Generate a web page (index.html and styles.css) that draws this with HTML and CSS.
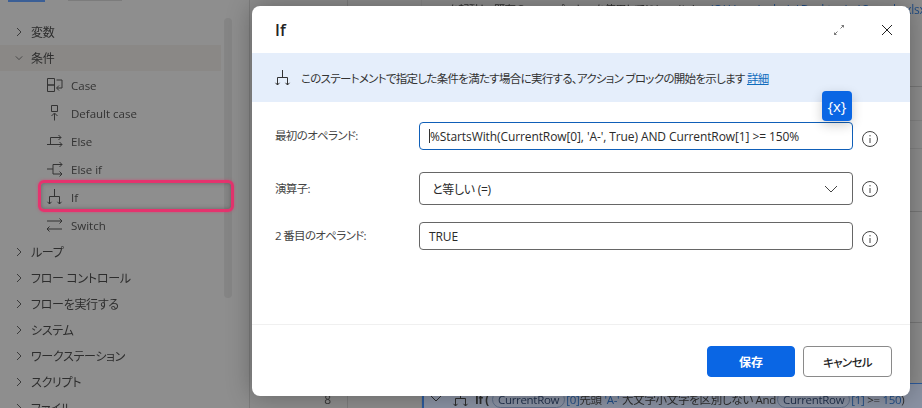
FILE: index.html
```html
<!DOCTYPE html>
<html lang="ja">
<head>
<meta charset="utf-8">
<title>If</title>
<link rel="stylesheet" href="styles.css">
</head>
<body>
<div class="app">
  <aside class="sidebar">
    <div class="tabs"><span class="tab tab-on"></span><span class="tab"></span></div>
    <div class="tree">
      <div class="group"><svg class="chev" width="8" height="10" viewBox="0 0 8 10"><path d="M2 1l4 4-4 4"/></svg>変数</div>
      <div class="group group-open"><svg class="chev" width="10" height="8" viewBox="0 0 10 8"><path d="M1 2l4 4 4-4"/></svg>条件</div>
      <div class="item">
        <svg class="ico" width="18" height="18" viewBox="0 0 18 18"><path d="M1.500 2.500h7v6.500h-7zM1.500 9h7v6.500h-7zM10.500 4h5.500v8h-5M13 9.500l-2.500 2.500 2.500 2.500"/></svg>Case</div>
      <div class="item">
        <svg class="ico" width="18" height="18" viewBox="0 0 18 18"><path d="M5.500 1.500h6v6h-6zM8.500 16.500v-7M5.500 12l3-3 3 3"/></svg>Default case</div>
      <div class="item">
        <svg class="ico" width="18" height="18" viewBox="0 0 18 18"><path d="M1 12.500h15M13.500 10l2.500 2.500-2.500 2.500M4.500 12.500v-7h10.500M12.500 3l2.500 2.500-2.500 2.500"/></svg>Else</div>
      <div class="item">
        <svg class="ico" width="18" height="18" viewBox="0 0 18 18"><path d="M1 9h6M7 4.500v9.500M7 4.500h9M13.500 2l2.500 2.500-2.500 2.500M7 14h9M13.500 11.500l2.500 2.500-2.500 2.500"/></svg>Else if</div>
      <div class="item item-marked">
        <svg class="ico" width="18" height="18" viewBox="0 0 18 18"><path d="M8.500 1v7.500M3.500 16v-7.500h10v7.500M1.500 13.800l2 2.200 2-2.200M11.500 13.800l2 2.200 2-2.200"/></svg>If
        <span class="mark"></span></div>
      <div class="item">
        <svg class="ico" width="18" height="18" viewBox="0 0 18 18"><path d="M1 5h15M13.500 2.500l2.500 2.500-2.500 2.500M16 13h-15M3.500 10.500l-2.500 2.500 2.500 2.500"/></svg>Switch</div>
      <div class="group"><svg class="chev" width="8" height="10" viewBox="0 0 8 10"><path d="M2 1l4 4-4 4"/></svg>ループ</div>
      <div class="group"><svg class="chev" width="8" height="10" viewBox="0 0 8 10"><path d="M2 1l4 4-4 4"/></svg>フロー コントロール</div>
      <div class="group"><svg class="chev" width="8" height="10" viewBox="0 0 8 10"><path d="M2 1l4 4-4 4"/></svg>フローを実行する</div>
      <div class="group"><svg class="chev" width="8" height="10" viewBox="0 0 8 10"><path d="M2 1l4 4-4 4"/></svg>システム</div>
      <div class="group"><svg class="chev" width="8" height="10" viewBox="0 0 8 10"><path d="M2 1l4 4-4 4"/></svg>ワークステーション</div>
      <div class="group"><svg class="chev" width="8" height="10" viewBox="0 0 8 10"><path d="M2 1l4 4-4 4"/></svg>スクリプト</div>
      <div class="group"><svg class="chev" width="8" height="10" viewBox="0 0 8 10"><path d="M2 1l4 4-4 4"/></svg>ファイル</div>
    </div>
    <div class="scrollbar"></div>
  </aside>
  <main class="editor">
    <div class="gutter"><span class="line-no">8</span></div>
    <div class="rail"></div>
    <div class="steps">
      <div class="step step-first"><span class="step-desc">Excel を起動し、既存の Excel プロセスを使用してドキュメント</span><span class="path">(C:\Users\admin\Desktop\...\Sample.xlsx</span></div>
      <div class="step step-b"></div>
      <div class="step step-c"></div>
      <div class="step step-d"></div>
      <div class="step step-e"></div>
      <div class="step step-f"></div>
      <div class="step step-sel">
        <svg class="step-chev" width="12" height="8" viewBox="0 0 12 8"><path d="M1 1l5 5 5-5"/></svg>
        <svg class="step-ico" width="18" height="18" viewBox="0 0 18 18"><path d="M8.500 1v7.500M3.500 16v-7.500h10v7.500M1.500 13.800l2 2.200 2-2.200M11.500 13.800l2 2.200 2-2.200"/></svg>
        <span class="step-text"><b class="step-if">If (</b><span class="pill">CurrentRow</span><span class="blue">[0]</span>先頭 <span class="blue">'A-'</span> 大文字小文字を区別しない And<span class="pill">CurrentRow</span><span class="blue">[1]</span> &gt;= <span class="blue">150</span>)</span>
      </div>
    </div>
  </main>

  <section class="dialog">
    <header class="dialog-head">
      <h1 class="dialog-title">If</h1>
      <svg class="expand" width="14" height="14" viewBox="0 0 14 14"><path d="M2.500 11.500l3-3M2.500 9.500v2h2M11.500 2.500l-3 3M9.500 2.500h2v2"/></svg>
      <svg class="close" width="14" height="14" viewBox="0 0 14 14"><path d="M2 2l10 10M12 2l-10 10"/></svg>
    </header>
    <div class="banner">
      <svg class="ico banner-ico" width="18" height="18" viewBox="0 0 18 18"><path d="M8.500 1v7.500M3.500 16v-7.500h10v7.500M1.500 13.800l2 2.200 2-2.200M11.500 13.800l2 2.200 2-2.200"/></svg>
      <span class="banner-text">このステートメントで指定した条件を満たす場合に実行する、アクション ブロックの開始を示します <a class="more" href="#">詳細</a></span>
    </div>
    <div class="form">
      <div class="field field-first">
        <label class="field-label">最初のオペランド:</label>
        <div class="input input-focus"><i class="caret"></i>%StartsWith(CurrentRow[0], 'A-', True) AND CurrentRow[1] &gt;= 150%
          <span class="var-btn">{x}</span>
        </div>
        <svg class="info" width="18" height="18" viewBox="0 0 18 18"><circle cx="9" cy="9" r="7.500"/><path d="M9 8v5M9 5v1.400"/></svg>
      </div>
      <div class="field field-select">
        <label class="field-label">演算子:</label>
        <div class="input input-select"><span>と等しい (=)</span>
          <svg class="select-chev" width="14" height="8" viewBox="0 0 14 8"><path d="M1 1l6 6 6-6"/></svg>
        </div>
        <svg class="info" width="18" height="18" viewBox="0 0 18 18"><circle cx="9" cy="9" r="7.500"/><path d="M9 8v5M9 5v1.400"/></svg>
      </div>
      <div class="field field-third">
        <label class="field-label">2 番目のオペランド:</label>
        <div class="input">TRUE</div>
        <svg class="info" width="18" height="18" viewBox="0 0 18 18"><circle cx="9" cy="9" r="7.500"/><path d="M9 8v5M9 5v1.400"/></svg>
      </div>
    </div>
    <footer class="dialog-foot">
      <button class="btn btn-primary">保存</button>
      <button class="btn">キャンセル</button>
    </footer>
  </section>
</div>
</body>
</html>
```
FILE: styles.css
```css
* { box-sizing: border-box; }
html, body { margin: 0; height: 100%; }
body {
  font-family: "Open Sans", "Noto Sans CJK JP", sans-serif;
  font-size: 12px;
  font-feature-settings: "palt";
  color: #242424;
  overflow: hidden;
}
svg { fill: none; stroke: currentColor; stroke-width: 1; flex: none; }

.app { position: relative; display: flex; width: 922px; height: 408px; overflow: hidden; background: #8d8d8d; }

/* left action tree */
.sidebar { position: relative; flex: none; width: 250px; height: 408px; background: #8e8e8e; border-right: 1px solid #7c7c7c; color: #2d2d2d; overflow: hidden; filter: blur(.35px); }
.tabs { display: flex; height: 19px; padding-left: 8px; gap: 23px; }
.tab { display: block; width: 37px; height: 1px; background: #7c7c7c; }
.tab:last-child { width: 54px; }
.tab-on { height: 2px; background: #3b5f96; }
.tree { width: 221px; }
.group { display: flex; align-items: center; height: 26px; padding-left: 15px; gap: 8px; font-size: 12px; letter-spacing: -.3px; }
.group .chev { width: 8px; color: #3a3a3a; }
.group-open { background: #8a8886; }
.item { position: relative; display: flex; align-items: center; height: 28px; padding-left: 46px; gap: 7px; font-size: 11.500px; color: #333; }
.mark { position: absolute; z-index: 1; left: 38px; top: -3px; width: 196px; height: 32px; border: 3px solid #e5336e; border-radius: 6px; box-shadow: 0 0 3px rgba(229, 51, 110, .6), inset 0 0 4px rgba(60, 60, 60, .5); }
.scrollbar { position: absolute; left: 224px; top: 18px; width: 8px; height: 280px; background: #858585; border-radius: 4px; }

/* backdrop editor */
.editor { flex: 1; display: flex; min-width: 0; background: #8d8d8d; color: #2d2d2d; filter: blur(.35px); }
.gutter { flex: none; width: 98px; display: flex; flex-direction: column; justify-content: flex-end; align-items: flex-end; padding: 0 16px 0 0; border-right: 1px solid #7d7d7d; }
.line-no { height: 16px; line-height: 16px; font-size: 12px; color: #383838; }
.rail { flex: none; width: 74px; border-right: 1px solid #868686; }
.steps { flex: 1; min-width: 0; display: flex; flex-direction: column; overflow: hidden; }
.step { flex: none; white-space: nowrap; border-bottom: 1px solid #777; }
.step-first { display: flex; height: 87px; padding: 2px 0 0 0; line-height: 16px; }
.step-desc { flex: none; width: 288px; font-size: 11.500px; letter-spacing: -.7px; }
.path { flex: none; color: #1f4c85; letter-spacing: -.25px; }
.step-b { height: 34px; border-color: #828282; }
.step-c { height: 28px; border-color: #828282; }
.step-d { height: 63px; }
.step-e { height: 111px; }
.step-f { height: 61px; border-color: #2c5a9c; }
.step-sel { display: flex; align-items: center; flex: 1; padding: 6px 0 0 6px; border-left: 2px solid #2c5a9c; border-bottom: 0; background: #8a92a3; }
.step-chev { margin-right: 10px; }
.step-ico { margin-right: 5px; }
.step-text { flex: none; font-size: 11.500px; letter-spacing: -.3px; }
.step-if { margin-right: 2px; font-weight: 700; }
.pill { padding: 0 5px; margin: 0 1px; border: 1px solid #5f6f88; border-radius: 9px; color: #1f2f4a; }
.blue { color: #1f4c85; }

/* dialog */
.dialog { position: absolute; left: 252px; top: 6px; display: flex; flex-direction: column; width: 658px; height: 390px; background: #fff; border-radius: 8px; box-shadow: 0 0 26px rgba(0, 0, 0, .3); overflow: visible; }
.dialog-head { display: flex; align-items: center; height: 47px; padding: 0 16px 0 23px; flex: none; }
.dialog-title { flex: 1; margin: 0; font-size: 16px; font-weight: 600; color: #242424; }
.expand { margin-right: 34px; width: 14px; color: #555; stroke-width: .8; }
.close { color: #222; }
.banner { display: flex; align-items: center; height: 49px; flex: none; padding-left: 22px; gap: 9px; background: #e5eefb; color: #333; }
.banner-text { font-size: 11.500px; letter-spacing: -.7px; }
.banner-ico { width: 18px; }
.more { color: #0f6cbd; }
.form { flex: 1; display: flex; flex-direction: column; padding: 20px 0 0 23px; }
.field { display: flex; align-items: flex-start; }
.field-select { margin-top: 22px; }
.field-third { margin-top: 17px; }
.field-label { flex: none; width: 144px; line-height: 28px; font-size: 11.500px; letter-spacing: -.67px; color: #444; }
.field-select .field-label { line-height: 33px; }
.input { position: relative; flex: none; display: flex; align-items: center; width: 434px; height: 28px; padding: 0 9px; border: 1px solid #666; border-radius: 4px; color: #2a2a2a; font-size: 12px; font-weight: 500; letter-spacing: -.1px; white-space: nowrap; }
.input-focus { border: 1px solid #0f5fb8; }
.caret { flex: none; width: 1px; height: 14px; background: #333; }
.input-select { height: 33px; justify-content: space-between; padding: 0 14px 0 12px; font-weight: 400; letter-spacing: -.3px; }
.select-chev { color: #444; }
.var-btn { position: absolute; right: 0; top: -32px; display: flex; align-items: center; justify-content: center; width: 30px; height: 30px; border-radius: 4px; background: #0a66e4; color: #fff; font-size: 15px; font-weight: 400; box-shadow: 0 4px 12px rgba(0, 0, 0, .2); }
.info { margin: 8px 0 0 8px; color: #444; }
.dialog-foot { display: flex; justify-content: flex-end; gap: 8px; flex: none; height: 72px; padding: 21px 18px 0 0; border-top: 1px solid #f0f0f0; }
.btn { width: 89px; height: 31px; padding: 0; border: 1px solid #8a8a8a; border-radius: 4px; background: #fff; color: #242424; font: 500 11.500px "Open Sans", "Noto Sans CJK JP", sans-serif; font-feature-settings: "palt"; letter-spacing: -.7px; }
.btn-primary { width: 88px; border-color: #0a66e4; background: #0a66e4; color: #fff; font-size: 12px; font-weight: 700; letter-spacing: 0; }
```
